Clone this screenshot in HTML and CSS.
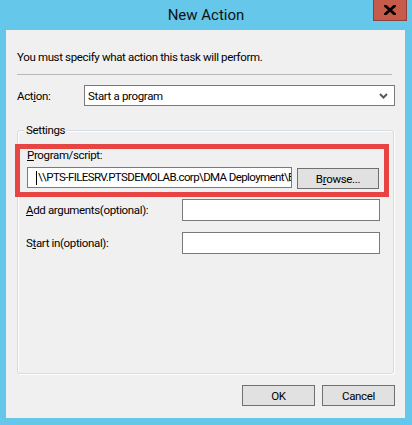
FILE: index.html
```html
<!DOCTYPE html>
<html>
<head>
<meta charset="utf-8">
<link rel="stylesheet" href="styles.css">
</head>
<body>
<div class="window">
  <div class="titlebar">
    <div class="tb-spacer"></div>
    <div class="title">New Action</div>
    <div class="tb-right">
      <div class="close">
        <svg width="12" height="10" viewBox="0 0 12 10"><path d="M1.5 1 L10.5 9 M10.5 1 L1.5 9" stroke="#000" stroke-width="2.8" stroke-linecap="square"/></svg>
      </div>
    </div>
  </div>
  <div class="client">
    <div class="intro">You must specify what action this task will perform.</div>
    <div class="sep"></div>
    <div class="action-row">
      <div class="lbl action-lbl">Act<u>i</u>on:</div>
      <div class="combo">
        <span>Start a program</span>
        <svg class="chev" width="9" height="6" viewBox="0 0 9 6"><path d="M1 1 L4.5 4.5 L8 1" fill="none" stroke="#5a5a5a" stroke-width="2"/></svg>
      </div>
    </div>
    <div class="group">
      <div class="legend">Settings</div>
      <div class="highlight">
        <div class="lbl prog-lbl"><u>P</u>rogram/script:</div>
        <div class="prog-row">
          <div class="field prog-field"><span class="caret"></span><span class="prog-text">\\PTS-FILESRV.PTSDEMOLAB.corp\DMA Deployment\B</span></div>
          <div class="btn browse">B<u>r</u>owse...</div>
        </div>
      </div>
      <div class="opt-row">
        <div class="lbl"><u>A</u>dd arguments(optional):</div>
        <div class="field opt-field"></div>
      </div>
      <div class="opt-row second">
        <div class="lbl">S<u>t</u>art in(optional):</div>
        <div class="field opt-field"></div>
      </div>
    </div>
    <div class="buttons">
      <div class="btn dlg">OK</div>
      <div class="btn dlg">Cancel</div>
    </div>
  </div>
</div>
</body>
</html>
```
FILE: styles.css
```css
* { box-sizing: border-box; }
html, body { margin: 0; padding: 0; }
body {
  width: 412px;
  height: 425px;
  overflow: hidden;
  font-family: Roboto, "Noto Sans", sans-serif;
  font-size: 11.5px;
  letter-spacing: -0.35px;
  color: #000;
}
.window {
  width: 412px;
  height: 425px;
  background: #65c8eb;
  display: flex;
  flex-direction: column;
}
.titlebar {
  height: 30px;
  display: grid;
  grid-template-columns: 1fr auto 1fr;
  align-items: start;
}
.title {
  font-size: 15px;
  letter-spacing: 0;
  line-height: 20px;
  margin-top: 5px;
  color: #111;
}
.tb-right {
  display: flex;
  justify-content: flex-end;
  padding-right: 5px;
}
.close {
  width: 34px;
  height: 21px;
  background: #c65a4b;
  border: 1px solid #8e4036;
  border-top: none;
  display: flex;
  align-items: center;
  justify-content: center;
}
.client {
  margin: 0 7px 0 6px;
  height: 388px;
  background: #f0f0f0;
  display: flex;
  flex-direction: column;
  padding-top: 19px;
}
.intro {
  line-height: 16px;
  padding-left: 11px;
}
.sep {
  margin: 9px 13px 0 11px;
  height: 1px;
  background: #b9b9b9;
}
.lbl { line-height: 16px; white-space: nowrap; }
.action-row {
  display: flex;
  align-items: center;
  margin: 10px 10px 0 11px;
}
.action-lbl { width: 67px; }
.combo {
  flex: 1;
  height: 21px;
  background: #fff;
  border: 1px solid #7a7a7a;
  display: flex;
  align-items: center;
  justify-content: space-between;
  padding: 0 6px 0 3px;
}
.group {
  flex: 1;
  margin: 24px 11px 0 11px;
  border: 1px solid #d6dde2;
  border-radius: 3px;
  box-shadow: 1px 1px 0 #fff, inset 1px 1px 0 #fff;
  display: flex;
  flex-direction: column;
}
.legend {
  align-self: flex-start;
  margin: -9px 0 0 6px;
  padding: 0 2px;
  line-height: 16px;
  background: #f0f0f0;
}
.highlight {
  margin: 6px 4px 0 -3px;
  border: 5px solid #e74444;
  padding: 0 5px 3px 7px;
}
.prog-lbl { line-height: 13px; }
.prog-row {
  display: flex;
  align-items: flex-start;
  margin-top: 5px;
  gap: 5px;
}
.field {
  background: #fff;
  border: 1px solid #7a7a7a;
  height: 22px;
}
.prog-field {
  width: 265px;
  height: 21px;
  padding-left: 8px;
  white-space: nowrap;
  overflow: hidden;
  display: flex;
  align-items: center;
}
.prog-text { line-height: 19px; letter-spacing: -0.6px; }
.caret {
  display: inline-block;
  width: 1px;
  height: 14px;
  background: #000;
  margin-right: 1px;
  flex: none;
}
.btn {
  background: #e1e1e1;
  border: 1px solid #707070;
  display: flex;
  align-items: center;
  justify-content: center;
  height: 21px;
}
.browse {
  width: 82px;
  margin-top: 1px;
}
.opt-row {
  display: flex;
  align-items: center;
  justify-content: space-between;
  margin: 2px 13px 0 8px;
}
.opt-row.second { margin-top: 11px; }
.opt-field { width: 198px; }
.buttons {
  display: flex;
  justify-content: flex-end;
  gap: 7px;
  margin: 11px 10px 12px 0;
}
.dlg { width: 73px; }
```
